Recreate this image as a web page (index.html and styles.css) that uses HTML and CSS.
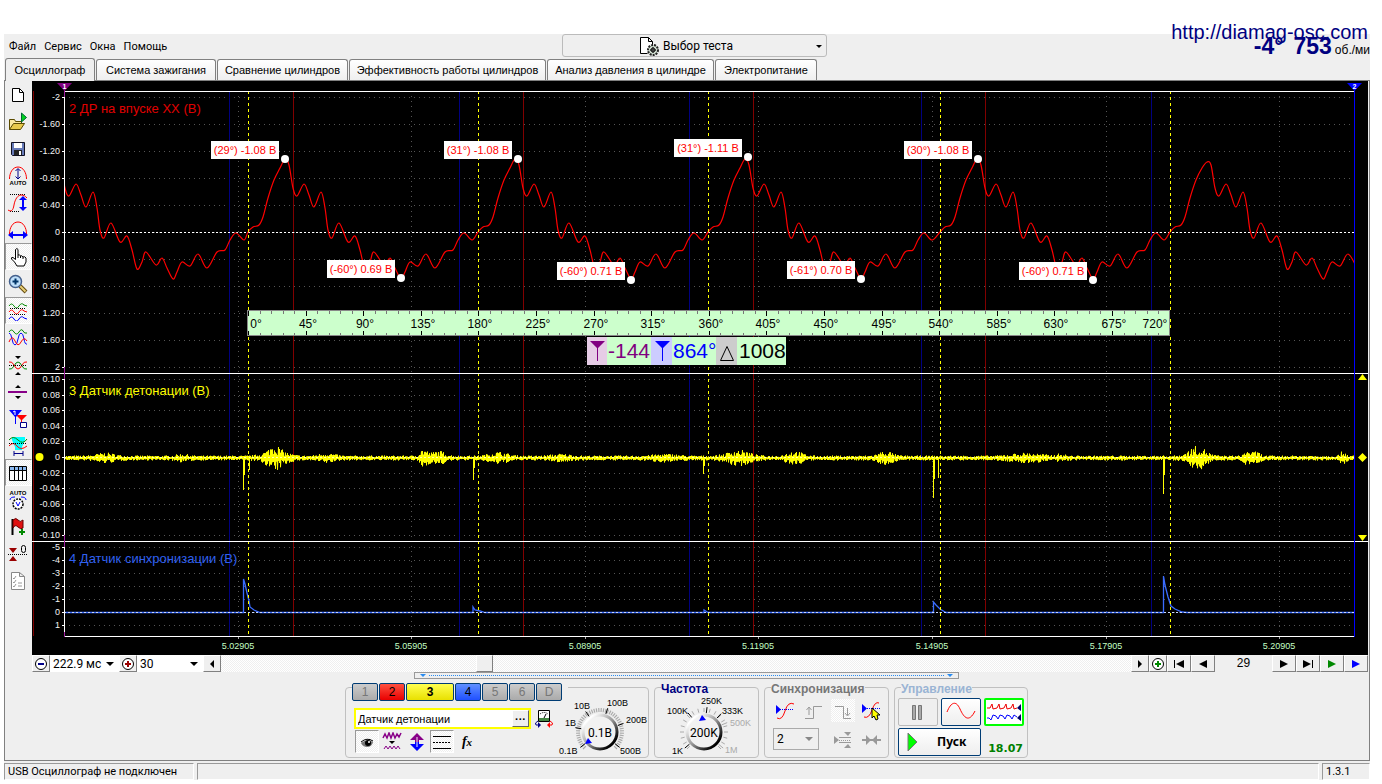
FILE: index.html
```html
<!DOCTYPE html>
<html lang="ru">
<head>
<meta charset="utf-8">
<title>Осциллограф</title>
<link rel="stylesheet" href="styles.css">
</head>
<body>
<div class="window">
  <header class="header">
    <nav class="menu">
      <button>Файл</button><button>Сервис</button><button>Окна</button><button>Помощь</button>
    </nav>
    <button class="test-picker">
      <svg width="20" height="20" viewBox="0 0 20 20"><path d="M1.500 1.500h8l4 4v4M9.500 1.500v4h4M1.500 1.500v16h7" fill="none" stroke="#000"/><path d="M2 2h7v4h4v4l-4 3v4H2z" fill="#fff"/><circle cx="14" cy="14" r="5" fill="#cfdccf" stroke="#222" stroke-width="2" stroke-dasharray="2 1"/><circle cx="14" cy="14" r="2" fill="#fff" stroke="#000"/><path d="M14 11v6M11 14h6" stroke="#000"/></svg>
      <span>Выбор теста</span>
      <i class="caret"></i>
    </button>
    <div class="readout"><b>-4°</b><b>753</b><span>об./ми</span></div>
    <a class="site" href="#">http://diamag-osc.com</a>
  </header>

  <div class="tabs" role="tablist">
    <button class="tab tab-active" role="tab">Осциллограф</button>
    <button class="tab" role="tab">Система зажигания</button>
    <button class="tab" role="tab">Сравнение цилиндров</button>
    <button class="tab" role="tab">Эффективность работы цилиндров</button>
    <button class="tab" role="tab">Анализ давления в цилиндре</button>
    <button class="tab" role="tab">Электропитание</button>
  </div>

  <main class="page">
    <div class="workspace">
      <div class="toolbar">
        <button aria-label="Новый"><svg viewBox="0 0 20 20"><path d="M4.500 3.500h7l4 4v9h-11z" fill="#fff" stroke="#000"/><path d="M11.500 3.500v4h4" fill="none" stroke="#000"/></svg></button>
        <button aria-label="Открыть"><svg viewBox="0 0 20 20"><path d="M1.500 17.500v-10h5l1 2h6v3" fill="#fbe9a0" stroke="#5a4a00"/><path d="M1.500 17.500l4-6h11l-4 6z" fill="#e8c94c" stroke="#5a4a00"/><path d="M13.500 10V1l5 4.500z" fill="#00d020" stroke="#063" /></svg></button>
        <button aria-label="Сохранить"><svg viewBox="0 0 20 20"><path d="M3.500 3.500h13v13h-12l-1-1z" fill="#667ab8" stroke="#112"/><path d="M6 4h8v5H6z" fill="#fff"/><path d="M6 11h8v5H6z" fill="#222"/><path d="M11 12h2v4h-2z" fill="#fff"/></svg></button>
        <button aria-label="Авто масштаб"><svg viewBox="0 0 20 20"><path d="M1.500 13c0-6 3-12 8.500-12s8.500 6 8.500 12" fill="none" stroke="#f00"/><path d="M10 3v9M7.500 5L10 2.500 12.500 5M7.500 10.500L10 13l2.500-2.500" fill="none" stroke="#008"/><text x="10" y="19" class="auto">AUTO</text></svg></button>
        <button aria-label="Масштаб по вертикали"><svg viewBox="0 0 20 20"><path d="M2 1.500h16M2 18.500h10" stroke="#000" stroke-dasharray="1 1"/><path d="M0 17c3 2 5 1 6-5s4-10 7-10 4 1 6 3" fill="none" stroke="#f00"/><path d="M15 5v12" stroke="#00f" stroke-width="2"/><path d="M11 7l4-4 4 4zM11 14l4 4 4-4z" fill="#00f"/></svg></button>
        <button aria-label="Масштаб по горизонтали"><svg viewBox="0 0 20 20"><path d="M1.500 14c0-6 3-12 8.500-12s8.500 6 8.500 12" fill="none" stroke="#f00"/><path d="M4 15h12" stroke="#00f" stroke-width="2"/><path d="M5 11v8l-5-4zM15 11v8l5-4z" fill="#00f"/></svg></button>
        <button class="pressed" aria-label="Рука"><svg viewBox="0 0 20 20"><path d="M7.500 11V2.500q1.500-2 2.500 0V8q1.500-1 2.500 1 1.500-1 2.500 1 2-1 3 1v4l-2 4h-7l-2.500-4-3-3q-.5-2 1.500-1.500l2.500 2z" fill="#fff" stroke="#000"/><path d="M10 8v3M12.500 9v2M15 10v2" stroke="#000"/></svg></button>
        <button aria-label="Лупа"><svg viewBox="0 0 20 20"><path d="M12 12l6 6" stroke="#654b10" stroke-width="4"/><path d="M12 12l5.500 5.500" stroke="#e8d078" stroke-width="2"/><circle cx="7.500" cy="7.500" r="6" fill="#bfe0fb" stroke="#44608c" stroke-width="1.500"/><path d="M7.500 4.500v6M4.500 7.500h6" stroke="#036" stroke-width="2"/></svg></button>
        <button class="pressed" aria-label="Раздельно"><svg viewBox="0 0 20 20"><g fill="none"><path d="M1 5q2.500-4 5 0t5 0 5-1l3 1" stroke="#080"/><path d="M1 11q2.500-4 5 0t5 0 5-1l3 1" stroke="#f00"/><path d="M1 18q2.500-4 5 0t5 0 5-1l3 1" stroke="#00f"/><path d="M2 7.500h16M2 13.500h16" stroke="#000" stroke-dasharray="1 1"/></g></svg></button>
        <button aria-label="Совместно"><svg viewBox="0 0 20 20"><g fill="none"><path d="M1 4q2.500-4 5 0t5 0 4-1 4 2" stroke="#080"/><path d="M1 5q2 0 3 6t3 6 3-6 3-6 3 6 3 5" stroke="#00f"/><path d="M1 14q3-8 6-1t6 1 6-1" stroke="#f00"/></g></svg></button>
        <button aria-label="Ноль"><svg viewBox="0 0 20 20"><g fill="none"><path d="M1 14q3 1 5-3t4-4 4 4 5 3" stroke="#080"/><path d="M1 7q3-1 5 3t4 4 4-4 5-3" stroke="#f00"/><path d="M1 10.500h18" stroke="#000" stroke-dasharray="1 1"/></g><path d="M7 1h6l-3 3zM7 20h6l-3-3z"/></svg></button>
        <button aria-label="Смещение"><svg viewBox="0 0 20 20"><path d="M0 9h19v2H0z" fill="#808"/><path d="M7 6h6l-3-3zM7 14h6l-3 3z"/></svg></button>
        <button aria-label="Маркеры"><svg viewBox="0 0 20 20"><path d="M8 6h11l-5 5v5h-1v-5z" fill="#f00"/><path d="M1 1h13L8 8v7H7V8z" fill="#00f"/><path d="M5 3l2-1v4" fill="none" stroke="#fff"/><path d="M12.500 13.500h6v5h-6z" fill="#fff" stroke="#008"/></svg></button>
        <button aria-label="Диапазон"><svg viewBox="0 0 20 20"><path d="M4 1h13v3l-3 7v3H7v-3L4 4z" fill="#0ff"/><g fill="none"><path d="M1 4q4-5 9 0t9-1" stroke="#080"/><path d="M1 10q4-5 8 0t10 0" stroke="#f00"/><path d="M1 7.500h18" stroke="#000" stroke-dasharray="1 1"/><path d="M6 17.500h9M6 15v5M15 15v5" stroke="#008"/></g></svg></button>
        <button class="pressed" aria-label="Таблица"><svg viewBox="0 0 20 20"><path d="M1.500 3.500h17v14h-17z" fill="#fff" stroke="#000"/><path d="M2 4h16v3H2z" fill="#8ab8f0"/><path d="M1 7.500h18M6.500 4v13M10.500 4v13M14.500 4v13" stroke="#000"/></svg></button>
        <button aria-label="Авто напряжение"><svg viewBox="0 0 20 20"><text x="10" y="5" class="auto">AUTO</text><circle cx="10" cy="14" r="5" fill="#fff" stroke="#000" stroke-width="1.500" stroke-dasharray="2 1"/><path d="M8 12l2 4 2-4" fill="none" stroke="#00f"/><path d="M2 10q0-3 5-3M18 10q0-3-5-3" fill="none" stroke="#00f"/></svg></button>
        <button aria-label="Флаг"><svg viewBox="0 0 20 20"><path d="M4.500 2v16" stroke="#000" stroke-width="2"/><path d="M5 3q3-3 5 0t5 0v8q-2 2-5-1t-5 1z" fill="#e01010" stroke="#600"/><path d="M14 12v6M11 15h6" stroke="#080" stroke-width="2"/></svg></button>
        <button aria-label="Установить ноль"><svg viewBox="0 0 20 20"><path d="M0 10.500h19" stroke="#000" stroke-dasharray="1 1"/><path d="M1 4h8L5 9zM1 17h8l-4-5z" fill="#900"/><rect x="13.500" y="1.500" width="4" height="7" rx="2" fill="none" stroke="#000"/></svg></button>
        <button aria-label="Отчёт"><svg viewBox="0 0 20 20"><path d="M3.500 1.500h8l5 4v13h-13zM11.500 1.500v4h5" fill="#fff" stroke="#888"/><path d="M5 7l1 1 2-3M5 11l1 1 2-3M5 15l1 1 2-3M10 12h4M10 15h4" fill="none" stroke="#999"/></svg></button>
      </div>

      <div class="scope">
        <svg id="chart" class="chart" viewBox="32 81 1336 574" role="img" aria-label="Осциллограмма"></svg>
        <div class="nav">
          <button class="nav-btn nav-small" aria-label="Уменьшить"><svg viewBox="0 0 16 16"><circle cx="8" cy="8" r="5.500" fill="#fff" stroke="#000"/><path d="M5 8h6" stroke="#008" stroke-width="2"/></svg></button>
          <span class="pick pick-time"><select aria-label="Длительность"><option>222.9 мс</option></select></span>
          <button class="nav-btn nav-small" aria-label="Увеличить"><svg viewBox="0 0 16 16"><circle cx="8" cy="8" r="5.500" fill="#fff" stroke="#000"/><path d="M5 8h6M8 5v6" stroke="#900" stroke-width="2"/></svg></button>
          <span class="pick pick-count"><select aria-label="Количество"><option>30</option></select></span>
          <button class="nav-btn nav-small" aria-label="Влево"><svg viewBox="0 0 16 16"><path d="M10 4v8L6 8z"/></svg></button>
          <div class="track"><div class="thumb"></div></div>
          <button class="nav-btn nav-small" aria-label="Вправо"><svg viewBox="0 0 16 16"><path d="M6 4v8l4-4z"/></svg></button>
          <button class="nav-btn nav-small" aria-label="Добавить"><svg viewBox="0 0 16 16"><circle cx="8" cy="8" r="5.500" fill="#fff" stroke="#000"/><path d="M5 8h6M8 5v6" stroke="#080" stroke-width="2"/></svg></button>
          <button class="nav-btn" aria-label="В начало"><svg viewBox="0 0 16 16"><path d="M3 4h1v8H3zM13 4v8L5 8z"/></svg></button>
          <button class="nav-btn" aria-label="Назад"><svg viewBox="0 0 16 16"><path d="M12 4v8L4 8z"/></svg></button>
          <span class="frame">29</span>
          <button class="nav-btn" aria-label="Вперёд"><svg viewBox="0 0 16 16"><path d="M4 4v8l8-4z"/></svg></button>
          <button class="nav-btn" aria-label="В конец"><svg viewBox="0 0 16 16"><path d="M12 4h1v8h-1zM3 4v8l8-4z"/></svg></button>
          <button class="nav-btn" aria-label="Пуск вперёд"><svg viewBox="0 0 16 16"><path d="M4 4v8l8-4z" fill="#080"/></svg></button>
          <button class="nav-btn" aria-label="Воспроизвести"><svg viewBox="0 0 16 16"><path d="M4 4v8l8-4z" fill="#00f"/></svg></button>
        </div>
      </div>
    </div>

    <div class="splitter"><i></i><b></b><i></i></div>

    <div class="controls">
      <fieldset class="panel panel-channel">
        <div class="channel">
          <div class="channels">
            <button class="ch">1</button><button class="ch ch-red">2</button><button class="ch ch-yellow">3</button><button class="ch ch-blue">4</button><button class="ch">5</button><button class="ch">6</button><button class="ch">D</button>
          </div>
          <div class="sensor">
            <div class="sensor-box"><input aria-label="Датчик" value="Датчик детонации"><button aria-label="Выбрать датчик">···</button></div>
            <button class="flat" aria-label="Полярность"><svg viewBox="0 0 20 20"><path d="M4.500 1.500h11v11h-11z" fill="#fff" stroke="#000" stroke-width="1"/><path d="M6 5q4-3 8 0" stroke="#000" stroke-dasharray="1 1" fill="none"/><path d="M10 9l2-4" stroke="#000"/><path d="M5 9h10v3H5z" fill="#484"/><path d="M4 12q-4 2-2 4l3 0" fill="none" stroke="#008"/><path d="M4 13l3 3-3 3z" fill="#008"/><path d="M16 12q4 2 2 4l-3 0" fill="none" stroke="#f00"/><path d="M16 13l-3 3 3 3z" fill="#f00"/></svg></button>
          </div>
          <div class="modes">
            <button class="flat pressed" aria-label="Показать"><svg viewBox="0 0 20 20"><path d="M4 11q6-5 12-1-1 5-6 5-4 0-6-4z" fill="#777"/><path d="M4 10q6-5 12-1" fill="none" stroke="#000"/><circle cx="11" cy="11" r="3"/><circle cx="12" cy="10" r="1" fill="#fff"/></svg></button>
            <button class="flat" aria-label="Фильтр"><svg viewBox="0 0 20 20"><path d="M1 6l2-4 2 4 2-5 2 5 2-5 2 5 2-4 2 3 2-4" fill="none" stroke="#808" stroke-width="1.500"/><path d="M7 9h6l-3 3z"/><path d="M2 17l2-3 2 3 2-3 2 3 2-3 2 3 2-3 2 3" fill="none" stroke="#808"/></svg></button>
            <button class="flat" aria-label="Инверсия"><svg viewBox="0 0 20 20"><path d="M10 1l7 7h-5v2H8V8H3z" fill="#808"/><path d="M10 19l7-7h-5v-2H8v2H3z" fill="#00f"/><path d="M10 5v10" stroke="#efefef"/></svg></button>
            <button class="flat pressed" aria-label="Сетка"><svg viewBox="0 0 20 20"><path d="M1 4.500h18M1 16.500h18" stroke="#000"/><path d="M1 10.500h18" stroke="#000" stroke-dasharray="2 1"/></svg></button>
            <button class="flat fx" aria-label="Функция">f<sub>x</sub></button>
          </div>
        </div>
        <svg id="knob-volt" class="knob knob-volt" viewBox="562 692 86 65" role="img" aria-label="Диапазон 0.1В"></svg>
      </fieldset>

      <fieldset class="panel panel-freq">
        <legend class="navy">Частота</legend>
        <svg id="knob-freq" class="knob knob-freq" viewBox="656 692 101 65" role="img" aria-label="Частота 200K"></svg>
      </fieldset>

      <fieldset class="panel panel-sync">
        <legend class="grey">Синхронизация</legend>
        <div class="sync-grid">
          <button class="flat" aria-label="Уровень"><svg viewBox="0 0 20 20"><path d="M2 17q5 3 8-7t9-7" fill="none" stroke="#f00"/><path d="M5 8.500h14" stroke="#00f" stroke-dasharray="1 1"/><path d="M1 4v9l5-4.500z" fill="#00f"/></svg></button>
          <button class="flat" aria-label="Фронт"><svg viewBox="0 0 20 20"><path d="M1 17.500h8.500v-12H18M5 14V7M2.500 9L5 6l2.500 3" fill="none" stroke="#999"/></svg></button>
          <button class="flat dither" aria-label="Спад"><svg viewBox="0 0 20 20"><path d="M2 5.500h8.500v12H18M14.500 7v7M12 12l2.500 3 2.500-3" fill="none" stroke="#999"/></svg></button>
          <button class="flat" aria-label="Указать"><svg viewBox="0 0 20 20"><path d="M2 16q5 2 8-7t7-7" fill="none" stroke="#f00"/><path d="M5 7.500h14" stroke="#00f" stroke-dasharray="1 1"/><path d="M0 3v9l5-4.500z" fill="#00f"/><path d="M10 7v10l2-2 2 4 2-1-1-4h3z" fill="#ff0" stroke="#000"/></svg></button>
          <span class="pick pick-sync"><select aria-label="Канал"><option>2</option></select></span>
          <button class="flat" aria-label="По вертикали"><svg viewBox="0 0 20 20"><path d="M1 6v8l5-4zM11 2h7l-3 4zM11 18h7l-3-4z" fill="#999"/><path d="M6 7.500h12M6 12.500h12" stroke="#999"/><path d="M6 10.500h12" stroke="#999" stroke-dasharray="1 1"/></svg></button>
          <button class="flat" aria-label="По горизонтали"><svg viewBox="0 0 20 20"><path d="M0 9h19v2H0z" fill="#999"/><path d="M4 5v10l5-5zM15 5v10l-5-5z" fill="#999"/></svg></button>
        </div>
      </fieldset>

      <fieldset class="panel panel-run">
        <legend class="blue">Управление</legend>
        <div class="run-grid">
          <button class="big big-off" aria-label="Пауза"><svg viewBox="0 0 36 24"><path d="M12.500 5.500h3v14h-3zM18.500 5.500h3v14h-3z" fill="#aaa" stroke="#777"/></svg></button>
          <button class="big" aria-label="Синус"><svg viewBox="0 0 36 24"><path d="M4 12C8 2 13 0 17 9s9 14 15 2" fill="none" stroke="#f00"/></svg></button>
          <button class="big big-on" aria-label="Поток"><svg viewBox="0 0 36 24"><path d="M1 8h3l2-4 1 5 4-1 2-4 1 5 4-1 2-4 1 5 4-1 2-4 1 5 3-1" fill="none" stroke="#e00"/><path d="M1 18h2l2 2 2-5 3 1 2 3 2-4 3 1 2 3 2-4 3 1 2 3 2-4 3 2" fill="none" stroke="#00f"/><path d="M35 4v7l-4-3zM35 14v7l-4-3z" fill="#006"/></svg></button>
          <button class="big start"><svg viewBox="0 0 12 20"><path d="M1 1v18l9-9z" fill="#0f0" stroke="#777"/></svg><span>Пуск</span></button>
          <output class="rate">18.07</output>
        </div>
      </fieldset>
    </div>
  </main>

  <footer class="status">
    <span class="status-a">USB Осциллограф не подключен</span>
    <span class="status-b"></span>
    <span class="status-c">1.3.1</span>
  </footer>
</div>
<script src="scope.js"></script>
</body>
</html>
```
FILE: styles.css
```css
* { box-sizing: border-box; }
body {
  margin: 0;
  background: #fff;
  color: #000;
  font: 11px/14px "Liberation Sans", Arial, sans-serif;
}
button, input, select { font: inherit; color: inherit; margin: 0; padding: 0; border: 0; background: none; }
svg { display: block; }

.window { margin: 34px 12px 0 4px; background: #efefef; }

.header { position: relative; display: flex; height: 24px; align-items: flex-start; }
.menu { flex: 1; display: flex; gap: 8px; padding: 6px 0 0 5px; font-family: Roboto, sans-serif; }
.test-picker {
  display: flex; align-items: center; justify-content: center; gap: 4px;
  position: relative; width: 265px; height: 23px; margin-left: 9px; padding-right: 16px;
  border: 1px solid #bbb; border-radius: 3px; font: 12px/14px Roboto, sans-serif;
}
.caret { position: absolute; right: 4px; top: 10px; border: 3px solid transparent; border-top-color: #000; border-bottom: 0; }
.readout { flex: 1; display: flex; justify-content: flex-end; align-items: baseline; color: #000080; white-space: nowrap; }
.readout b { font-size: 23px; line-height: 24px; margin-left: 10px; }
.readout span { margin-left: 3px; color: #000; font-size: 12px; }
.site {
  position: absolute; right: 2px; top: -13px;
  color: #000080; font-size: 20px; line-height: 22px; text-decoration: none;
}

.tabs {
  display: grid; grid-template-columns: 90px 120px 131px 197px 167px 102px; gap: 1px;
  align-items: end; height: 23px; padding-left: 1px; border-bottom: 1px solid #808080;
}
.tab {
  height: 21px; white-space: nowrap;
  border: 1px solid #808080; border-bottom: 0; border-radius: 3px 3px 0 0;
  background: linear-gradient(#fff, #efefef);
}
.tab-active { height: 23px; margin-bottom: -1px; background: #efefef; }

.page { border: 1px solid #808080; border-top: 0; padding-right: 1px; }
.workspace { display: flex; }
.toolbar { flex: 0 0 27px; display: flex; flex-direction: column; }
.toolbar button { height: 27px; display: grid; place-items: center; padding-right: 2px; }
.toolbar svg { width: 20px; height: 20px; }
.auto { font: bold 6px "Liberation Sans", sans-serif; text-anchor: middle; }
.pressed, .track, .dither { background: repeating-conic-gradient(#fff 0 25%, #efefef 0 50%) 0 0 / 2px 2px; }
.pressed { border: 1px solid; border-color: #999 #fff #fff #999; }

.scope { flex: 1; min-width: 0; }
.chart { width: 100%; height: auto; background: #000; font-family: "Liberation Sans", Arial, sans-serif; }
.crisp { shape-rendering: crispEdges; }
.axis { fill: #f4f4f4; font-size: 9px; text-anchor: end; }
.time { fill: #c4ffc4; font-size: 9px; text-anchor: middle; }
.title { font-size: 13px; }
.note { fill: #f00; font-size: 11px; text-anchor: middle; }
.degree { font-size: 12px; text-anchor: middle; }
.measure { font-size: 21px; }

.nav { display: flex; height: 17px; background: #fff; }
.nav-btn {
  flex: 0 0 24px; display: grid; place-items: center; background: #efefef;
  border: 1px solid; border-color: #fff #808080 #808080 #fff;
}
.nav-small { flex-basis: 16px; }
.nav svg { width: 16px; height: 16px; }
.pick { position: relative; display: block; background: #fff; font: 12px/14px Roboto, sans-serif; }
.pick select { width: 100%; height: 100%; padding-left: 3px; appearance: none; }
.pick::after {
  content: ""; position: absolute; right: 5px; top: 7px; pointer-events: none;
  border: 4px solid transparent; border-top-color: #000; border-bottom: 0;
}
.pick-time { flex: 0 0 69px; }
.pick-count { flex: 0 0 66px; }
.track { flex: 1; }
.thumb { width: 17px; height: 17px; margin-left: 28%; background: #efefef; border: 1px solid; border-color: #fff #808080 #808080 #fff; }
.frame { flex: 0 0 57px; background: #efefef; text-align: center; font-size: 12px; line-height: 17px; }

.splitter {
  width: 40%; height: 7px; margin: 0 auto; padding: 0 5px;
  display: flex; align-items: center; gap: 3px; border: 1px solid #999;
}
.splitter i { border: 3px solid transparent; border-top-color: #2a8cf0; border-bottom: 0; }
.splitter b { flex: 1; border-top: 1px dotted #2a8cf0; }

.controls { display: flex; justify-content: center; gap: 5px; padding: 8px 0 2px; }
.panel { position: relative; margin: 0; padding: 0; height: 71px; min-width: 0; border: 1px solid #c0c0c0; border-radius: 4px; }
.panel legend { position: absolute; left: 6px; top: -6px; padding: 0; background: #efefef; font: bold 12px/14px "Liberation Sans", sans-serif; }
.navy { color: #000080; }
.grey { color: #777; }
.blue { color: #9ab4d4; }
.panel-channel { display: flex; width: 304px; }
.panel-freq { width: 105px; }
.panel-sync { width: 125px; }
.panel-run { width: 134px; }

.channel { width: 215px; padding-left: 6px; }
.channels { display: flex; gap: 1px; margin-top: -5px; width: 216px; background: #efefef; }
.ch {
  flex: 0 0 26px; height: 18px; border: 1px solid #003c74; border-radius: 2px;
  background: linear-gradient(#ccc, #aaa); color: #777; font-size: 12px;
}
.ch-red { background: linear-gradient(#ff5040, #e80000); color: #000; }
.ch-yellow { flex-basis: 48px; background: linear-gradient(#ffff50, #e8e000); color: #000; font-weight: bold; }
.ch-blue { background: linear-gradient(#6090ff, #2050ff); color: #000; }
.sensor { display: flex; align-items: center; gap: 3px; margin: 7px 0 1px 2px; }
.sensor-box { display: flex; width: 177px; height: 21px; border: 2px solid #ff0; background: #fff; }
.sensor-box input { flex: 1; min-width: 0; padding-left: 2px; outline: 0; }
.sensor-box button {
  width: 17px; background: #efefef; font-weight: bold; line-height: 12px;
  border: 1px solid; border-color: #fff #666 #666 #fff;
}
.flat { width: 24px; height: 23px; display: grid; place-items: center; }
.flat svg { width: 20px; height: 20px; }
.sensor .flat { width: 20px; height: 20px; }
.modes { display: flex; gap: 1px; margin-left: 3px; }
.fx { display: block; font: italic bold 14px/22px "Liberation Serif", serif; }
.fx sub { font-size: 11px; vertical-align: baseline; }

.knob { overflow: visible; margin-top: 4px; font: 9px "Liberation Sans", sans-serif; }
.knob-volt { width: 86px; height: 65px; }
.knob-freq { width: 101px; height: 65px; margin-left: 1px; }
.knob-value { font: 12px Roboto, sans-serif; text-anchor: middle; }

.sync-grid { display: grid; grid-template-columns: repeat(4, 24px); column-gap: 5px; row-gap: 6px; padding: 11px 0 0 8px; }
.pick-sync { grid-column: span 2; width: 46px; height: 22px; background: #efefef; border: 1px solid #aaa; }
.pick-sync::after { top: 8px; border-top-color: #888; }

.run-grid { display: grid; grid-template-columns: repeat(3, 40px); gap: 2px 3px; padding: 10px 0 0 3px; }
.big { height: 28px; display: grid; place-items: center; border: 1px solid #003c74; border-radius: 2px; background: linear-gradient(#fff, #eee); }
.big svg { width: 36px; height: 24px; }
.big-off { border-color: #bbb; background: #efefef; }
.big-on { border: 2px solid #0f0; background: #fff; }
.start { grid-column: span 2; display: flex; align-items: center; gap: 18px; padding-left: 8px; font: bold 12px/14px "Noto Sans", sans-serif; }
.start svg { width: 12px; height: 20px; }
.rate { color: #008000; font: bold 11px/14px "DejaVu Sans", sans-serif; text-align: right; padding: 14px 1px 0 0; }

.status { display: flex; gap: 3px; padding-top: 2px; font: 11px/14px Roboto, sans-serif; }
.status span { height: 17px; padding: 1px 3px; border: 1px solid; border-color: #999 #fff #fff #999; }
.status-a { flex: 0 0 190px; white-space: nowrap; }
.status-b { flex: 1; }
.status-c { flex: 0 0 48px; }
```
FILE: scope.js
```js
const NS = 'http://www.w3.org/2000/svg';

function add(parent, tag, attrs, text) {
  const node = document.createElementNS(NS, tag);
  for (const key in attrs) node.setAttribute(key, attrs[key]);
  if (text !== undefined) node.textContent = text;
  parent.appendChild(node);
  return node;
}

const chart = document.getElementById('chart');
const LEFT = 64, RIGHT = 1354, TOP = 91, BOTTOM = 636;

function hline(x1, x2, y, color, dash) {
  add(chart, 'path', { d: `M${x1} ${y + 0.5}H${x2}`, stroke: color, class: 'crisp', 'stroke-dasharray': dash || 'none' });
}
function vline(x, y1, y2, color, dash) {
  add(chart, 'path', { d: `M${x + 0.5} ${y1}V${y2}`, stroke: color, class: 'crisp', 'stroke-dasharray': dash || 'none' });
}

// Scales of the three traces
const rows = [
  [[97, 124, 151, 178, 205, 232, 259, 286, 313, 340, 367], ['-2', '-1.60', '-1.20', '-0.80', '-0.40', '0', '0.40', '0.80', '1.20', '1.60', '2']],
  [[379, 395, 410, 426, 441, 457, 473, 488, 504, 519, 535], ['0.10', '0.08', '0.06', '0.04', '0.02', '0', '-0.02', '-0.04', '-0.06', '-0.08', '-0.10']],
  [[547, 560, 573, 586, 599, 612, 625], ['-5', '-4', '-3', '-2', '-1', '0', '1']]
];
for (const [ys, labels] of rows) {
  ys.forEach((y, i) => {
    hline(LEFT, RIGHT, y, '#555', '1 4');
    hline(62, 64, y, '#fff');
    add(chart, 'text', { x: 60, y: y + 3, class: 'axis' }, labels[i]);
  });
}
const times = [[238, '5.02905'], [411, '5.05905'], [585, '5.08905'], [758, '5.11905'], [932, '5.14905'], [1106, '5.17905'], [1279, '5.20905']];
for (const [x, label] of times) {
  vline(x, 96, BOTTOM, '#555', '1 4');
  vline(x, BOTTOM, 639, '#aaa');
  add(chart, 'text', { x, y: 649, class: 'time' }, label);
}

for (const x of [229, 459, 689, 921, 1151]) vline(x, TOP, BOTTOM, '#000080');
for (const x of [33, 293, 523, 753, 985]) vline(x, TOP, BOTTOM, '#800000');
hline(LEFT, RIGHT, 232, '#fff', '2 2');

// Vacuum trace: one combustion cycle, offsets counted from the dead centre
const cycle = [[0, 232], [5, 227], [11, 225], [15, 217], [20, 198], [26, 180], [32, 168], [37, 159], [41, 165], [45, 188],
  [49, 196], [56, 184], [61, 195], [66, 207], [73, 192], [77, 208], [80, 230], [84, 238], [91, 223], [100, 242], [107, 236],
  [112, 250], [117, 269], [122, 262], [126, 252], [136, 265], [142, 258], [147, 268], [153, 279], [157, 272], [162, 262],
  [170, 266], [178, 254], [187, 268], [197, 252], [205, 250], [210, 240], [216, 233], [224, 240]];
const centres = [20, 248, 478, 708, 940, 1170];
const pts = [];
centres.forEach((c) => cycle.forEach(([dx, y]) => {
  const x = c + dx;
  if (x >= 60 && x <= 1362) pts.push([x, c === 1170 && dx === 37 ? 162 : y]);
}));
let d = `M${pts[0]}`;
for (let i = 0; i < pts.length - 1; i++) {
  const [a, b, c, e] = [pts[i - 1] || pts[i], pts[i], pts[i + 1], pts[i + 2] || pts[i + 1]];
  d += `C${b[0] + (c[0] - a[0]) / 6} ${b[1] + (c[1] - a[1]) / 6} ${c[0] - (e[0] - b[0]) / 6} ${c[1] - (e[1] - b[1]) / 6} ${c}`;
}
const clip = add(chart, 'clipPath', { id: 'plot' });
add(clip, 'rect', { x: LEFT, y: TOP, width: RIGHT - LEFT, height: BOTTOM - TOP });
add(chart, 'path', { d, fill: 'none', stroke: '#f00', 'stroke-width': 1.2, 'clip-path': 'url(#plot)' });

// Knock trace: noise with bursts
const bursts = [[105, 12, 3], [182, 8, 2], [275, 14, 7], [274, 5, 6], [326, 10, 3], [423, 5, 7], [438, 9, 5], [498, 12, 4], [560, 12, 2],
  [665, 16, 2], [738, 14, 6], [794, 10, 5], [885, 9, 5], [1026, 20, 3], [1060, 6, 2], [1197, 11, 10], [1248, 5, 6], [1257, 4, 4], [1343, 4, 5]];
let seed = 7;
const rnd = () => (seed = (seed * 16807) % 2147483647) / 2147483647;
let noise = `M${LEFT} 458`;
for (let x = LEFT; x < RIGHT; x++) {
  let amp = 2.4;
  for (const [cx, w, a] of bursts) amp += a * Math.exp(-(((x - cx) / w) ** 2));
  noise += `L${x + 0.5} ${(458 - amp * (0.2 + rnd() * 0.8)).toFixed(1)}V${(458 + amp * (0.2 + rnd() * 0.8)).toFixed(1)}`;
}
add(chart, 'path', { d: noise, fill: 'none', stroke: '#ff0' });
for (const [x, y] of [[243, 490], [244, 475], [249, 470], [473, 480], [474, 468], [703, 474], [704, 466], [933, 498], [934, 479], [938, 478], [1163, 494], [1164, 475]]) vline(x, 458, y, '#ff0');
hline(LEFT, RIGHT, 457, '#ffffb0', '2 2');

// Sync trace
add(chart, 'path', {
  d: 'M64 612.500H211h3H243.500V579L245 584 247 593 249 601 250 607 254 610 260 612.500H473V607L475 610 480 611 485 612.500H704V610L708 612.500H933.500V602L936 605 940 609 946 612.500H1163.500V576L1165 585 1168 597 1171 606 1175 609 1182 612 1187 612.500H1354',
  fill: 'none', stroke: '#3a6cff', 'stroke-width': 1.3
});
hline(LEFT, RIGHT, 612, '#c8d6ff', '2 2');

for (const x of [248, 478, 708, 940, 1170]) vline(x, TOP, BOTTOM, '#ff0', '3 3');

// Frame and cursors
hline(LEFT, RIGHT, TOP, '#fff');
hline(32, 1368, 373, '#fff');
hline(32, 1368, 541, '#fff');
hline(LEFT, RIGHT, BOTTOM, '#fff');
vline(LEFT, TOP, BOTTOM, '#fff');
for (const [a, b] of [[84, 97], [367, 379], [535, 547], [632, 637]]) vline(LEFT, a, b, '#a020a0');
vline(1354, 84, 637, '#00f');
add(chart, 'path', { d: 'M57 83H72L64.500 91z', fill: '#800080' });
add(chart, 'path', { d: 'M1347 83H1362L1354.500 91z', fill: '#00f' });
add(chart, 'text', { x: 64.5, y: 89, fill: '#fff', 'font-size': 7, 'font-weight': 'bold', 'text-anchor': 'middle' }, '1');
add(chart, 'text', { x: 1354.5, y: 89, fill: '#fff', 'font-size': 7, 'font-weight': 'bold', 'text-anchor': 'middle' }, '2');
add(chart, 'path', { d: 'M1358 380h9l-4.500-6zM1358 535h9l-4.500 6zM1358 457.500l4.500-4.500 4.500 4.500-4.500 4.500z', fill: '#ff0' });
add(chart, 'circle', { cx: 39.5, cy: 457, r: 4, fill: '#ff0' });

add(chart, 'text', { x: 69, y: 113, class: 'title', fill: '#e00000' }, '2 ДР на впуске XX (B)');
add(chart, 'text', { x: 69, y: 395, class: 'title', fill: '#ffff00' }, '3 Датчик детонации (B)');
add(chart, 'text', { x: 69, y: 563, class: 'title', fill: '#3060f0' }, '4 Датчик синхронизации (B)');

// Extremum labels
for (const [x, y, label] of [[285, 159, '(29°) -1.08 В'], [401, 278, '(-60°) 0.69 В'], [518, 159, '(31°) -1.08 В'], [631, 280, '(-60°) 0.71 В'],
  [748, 157, '(31°) -1.11 В'], [861, 279, '(-61°) 0.70 В'], [978, 159, '(30°) -1.08 В'], [1093, 280, '(-60°) 0.71 В']]) {
  add(chart, 'circle', { cx: x, cy: y, r: 4, fill: '#fff' });
  add(chart, 'rect', { x: x - 74, y: y - 18, width: 68, height: 18, fill: '#fff' });
  add(chart, 'text', { x: x - 40, y: y - 5, class: 'note' }, label);
}

// Crank angle ruler
add(chart, 'rect', { x: 247.5, y: 310.5, width: 922, height: 25, fill: '#ccffcc', stroke: '#888' });
for (let i = 0; i <= 80; i++) {
  const x = Math.round(248 + i * 11.52);
  const major = i % 5 === 0;
  vline(x, 311, major ? 316 : 314, major ? '#000' : '#777');
  vline(x, major ? 331 : 333, 335, major ? '#000' : '#777');
  if (major) {
    const at = i === 0 ? 256 : i === 80 ? 1155 : x + 2;
    add(chart, 'text', { x: at, y: 328, class: 'degree' }, `${i * 9}°`);
  }
}

// Cursor measurements
for (const [x, w, fill] of [[587, 20, '#e6cce6'], [607, 44, '#ccffcc'], [651, 21, '#ccccff'], [672, 44, '#ccffcc'], [716, 21, '#ccc'], [737, 49, '#ccffcc']]) {
  add(chart, 'rect', { x, y: 337, width: w, height: 28, fill });
}
add(chart, 'path', { d: 'M590 341h15l-7 7v13h-1v-13z', fill: '#800080' });
add(chart, 'path', { d: 'M655 341h15l-7 7v13h-1v-13z', fill: '#00f' });
add(chart, 'path', { d: 'M720.500 360.500h13l-6.500-14z', fill: 'none', stroke: '#000' });
add(chart, 'text', { x: 608, y: 358, class: 'measure', fill: '#800080' }, '-144');
add(chart, 'text', { x: 673, y: 358, class: 'measure', fill: '#00f' }, '864°');
add(chart, 'rect', { x: 716, y: 337, width: 2, height: 28, fill: '#ccc' });
add(chart, 'text', { x: 739, y: 358, class: 'measure' }, '1008');

// Rotary switches
function knob(id, cx, cy, value, labels, pointer) {
  const svg = document.getElementById(id);
  const grad = add(add(svg, 'defs', {}), 'linearGradient', { id: id + '-rim', x1: 0, y1: 0, x2: 1, y2: 1 });
  add(grad, 'stop', { offset: 0.15, 'stop-color': '#fff' });
  add(grad, 'stop', { offset: 0.5, 'stop-color': '#999' });
  add(grad, 'stop', { offset: 0.85, 'stop-color': '#000' });
  for (let a = -225; a <= 45; a += id === 'knob-volt' ? 6 : 15) {
    const t = a * Math.PI / 180;
    add(svg, 'path', { d: `M${cx + 20 * Math.cos(t)} ${cy + 20 * Math.sin(t)}L${cx + 24 * Math.cos(t)} ${cy + 24 * Math.sin(t)}`, stroke: '#aaa', 'stroke-width': id === 'knob-volt' ? 1.2 : 1 });
  }
  for (const [x, y, label, angle, color] of labels) {
    const t = angle * Math.PI / 180;
    add(svg, 'path', { d: `M${cx + 19 * Math.cos(t)} ${cy + 19 * Math.sin(t)}L${cx + 25 * Math.cos(t)} ${cy + 25 * Math.sin(t)}`, stroke: color || '#000' });
    add(svg, 'text', { x, y, fill: color || '#000' }, label);
  }
  add(svg, 'circle', { cx, cy, r: 17, fill: '#f2f2f2', stroke: `url(#${id}-rim)`, 'stroke-width': 3 });
  add(svg, 'path', { d: pointer, fill: '#00f' });
  add(svg, 'text', { x: cx, y: cy + 5, class: 'knob-value' }, value);
}
knob('knob-volt', 601, 732, '0.1В', [[560, 754, '0.1В', 142], [566, 726, '1В', 190], [575, 709, '10В', 235],
  [608, 706, '100В', 288], [627, 723, '200В', 340], [621, 754, '500В', 38]], 'M586 744l3-6 4 5z');
knob('knob-freq', 704, 732, '200K', [[667, 714, '100K', 230], [701, 704, '250K', 277], [722, 714, '333K', 313],
  [730, 726, '500K', 338, '#aaa'], [725, 753, '1M', 40, '#aaa'], [672, 754, '1K', 140]], 'M699 721l3-6 4 5z');
```
